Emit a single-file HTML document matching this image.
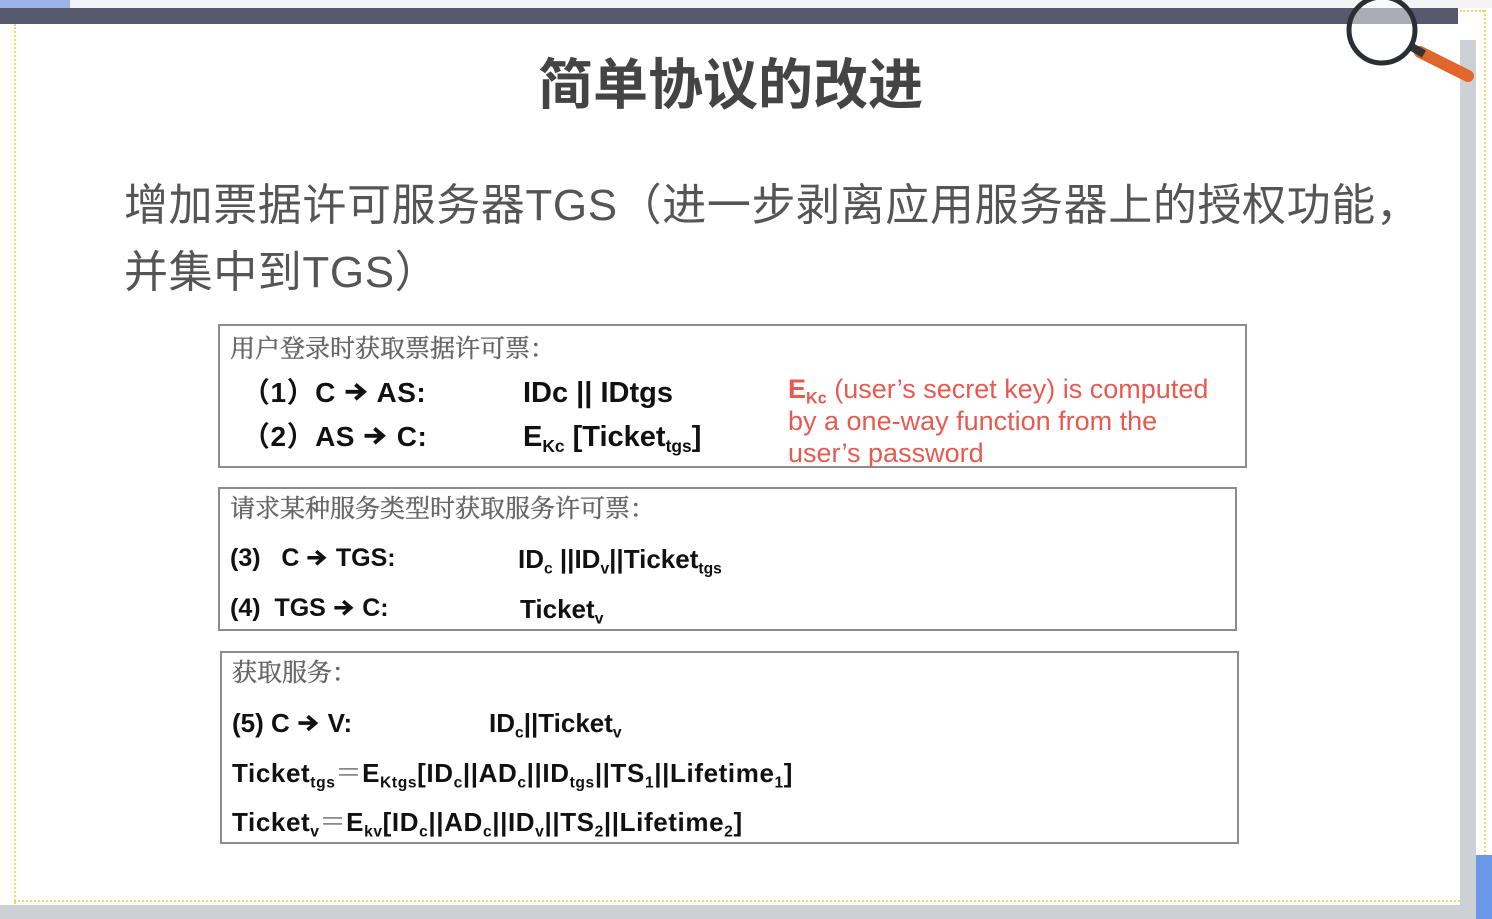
<!DOCTYPE html>
<html><head><meta charset="utf-8"><style>
body{margin:0;width:1492px;height:919px;overflow:hidden;background:#fff;position:relative;font-family:"Liberation Sans","Noto Sans CJK SC",sans-serif}
.a{position:absolute;white-space:nowrap;line-height:1}
.box{position:absolute;border:2px solid #8c8c8c;box-sizing:border-box;background:#fff}
.h{font-family:"Liberation Serif","Noto Serif CJK SC",serif;color:#666;font-size:25px;-webkit-text-stroke:0.4px #666}
.b{font-weight:bold;color:#111}
sub{font-size:60%;vertical-align:-0.35em;line-height:0}
.ar{display:inline-block;width:0.9em;height:0.7em;vertical-align:0}
</style></head><body>
<svg width="0" height="0" style="position:absolute"><defs><symbol id="ar" viewBox="0 0 20 16"><path d="M1 8H15M9 2L16 8L9 14" fill="none" stroke="#111" stroke-width="3.2"/></symbol></defs></svg>
<div class="a" style="left:0;top:0;width:1492px;height:8px;background:#f4f4f6"></div>
<div class="a" style="left:0;top:0;width:70px;height:8px;background:#9fb4e6"></div>
<div class="a" style="left:0;top:8px;width:1458px;height:16px;background:#575a6c"></div>
<div class="a" style="left:14px;top:24px;height:880px;border-left:2px dotted #f0d870"></div>
<div class="a" style="left:14px;top:900px;width:1470px;border-top:2px dotted #f0d870"></div>
<div class="a" style="left:1484px;top:10px;height:890px;border-left:2px dotted #f0d870"></div>
<div class="a" style="left:1460px;top:10px;width:24px;height:2px;border-top:2px dotted #f0d870"></div>
<div class="a" style="left:1460px;top:40px;width:16px;height:865px;background:#cdd1d6"></div>
<div class="a" style="left:0;top:905px;width:1492px;height:14px;background:#cdd1d6"></div>
<div class="a" style="left:1476px;top:855px;width:16px;height:64px;background:#6a98e8"></div>
<svg class="a" style="left:1340px;top:0" width="140" height="90" viewBox="0 0 140 90">
<line x1="80" y1="52" x2="128" y2="76" stroke="#e0662e" stroke-width="12" stroke-linecap="round"/>
<line x1="70" y1="46" x2="84" y2="54" stroke="#333" stroke-width="8"/>
<circle cx="42" cy="30" r="33" fill="rgba(255,255,255,0.5)" stroke="#2a2f33" stroke-width="5"/>
</svg>
<div class="a" style="left:538px;top:58px;font-size:55px;font-weight:bold;color:#444">简单协议的改进</div>
<div class="a" style="left:124px;top:184px;font-size:44px;color:#555;letter-spacing:0.6px">增加票据许可服务器TGS（进一步剥离应用服务器上的授权功能，</div>
<div class="a" style="left:124px;top:251px;font-size:44px;color:#555;letter-spacing:0.6px">并集中到TGS）</div>

<div class="box" style="left:218px;top:324px;width:1029px;height:144px"></div>
<div class="a h" style="left:230px;top:337px">用户登录时获取票据许可票：</div>
<div class="a b" style="left:242px;top:379px;font-size:28px;letter-spacing:0.5px">（1）C <svg class="ar"><use href="#ar"/></svg> AS:</div>
<div class="a b" style="left:523px;top:379px;font-size:29px">IDc || IDtgs</div>
<div class="a b" style="left:242px;top:423px;font-size:28px;letter-spacing:0.5px">（2）AS <svg class="ar"><use href="#ar"/></svg> C:</div>
<div class="a b" style="left:523px;top:423px;font-size:29px">E<sub>Kc</sub> [Ticket<sub>tgs</sub>]</div>
<div class="a" style="left:788px;top:373px;font-size:27px;color:#e85a50;line-height:32px">
<b>E<sub>Kc</sub></b> (user’s secret key) is computed<br>by a one-way function from the<br>user’s password</div>

<div class="box" style="left:218px;top:487px;width:1019px;height:144px"></div>
<div class="a h" style="left:230px;top:497px">请求某种服务类型时获取服务许可票：</div>
<div class="a b" style="left:230px;top:546px;font-size:25px">(3)&nbsp;&nbsp; C <svg class="ar"><use href="#ar"/></svg> TGS:</div>
<div class="a b" style="left:518px;top:546px;font-size:26px">ID<sub>c</sub> ||ID<sub>v</sub>||Ticket<sub>tgs</sub></div>
<div class="a b" style="left:230px;top:596px;font-size:25px">(4)&nbsp; TGS <svg class="ar"><use href="#ar"/></svg> C:</div>
<div class="a b" style="left:520px;top:596px;font-size:26px">Ticket<sub>v</sub></div>

<div class="box" style="left:220px;top:651px;width:1019px;height:193px"></div>
<div class="a h" style="left:232px;top:661px">获取服务：</div>
<div class="a b" style="left:232px;top:710px;font-size:26px">(5) C <svg class="ar"><use href="#ar"/></svg> V:</div>
<div class="a b" style="left:489px;top:710px;font-size:26px">ID<sub>c</sub>||Ticket<sub>v</sub></div>
<div class="a b" style="left:232px;top:760px;font-size:26px;letter-spacing:0.6px">Ticket<sub>tgs</sub><span style="font-weight:normal;color:#888">＝</span>E<sub>Ktgs</sub>[ID<sub>c</sub>||AD<sub>c</sub>||ID<sub>tgs</sub>||TS<sub>1</sub>||Lifetime<sub>1</sub>]</div>
<div class="a b" style="left:232px;top:809px;font-size:26px;letter-spacing:0.6px">Ticket<sub>v</sub><span style="font-weight:normal;color:#888">＝</span>E<sub>kv</sub>[ID<sub>c</sub>||AD<sub>c</sub>||ID<sub>v</sub>||TS<sub>2</sub>||Lifetime<sub>2</sub>]</div>
</body></html>
